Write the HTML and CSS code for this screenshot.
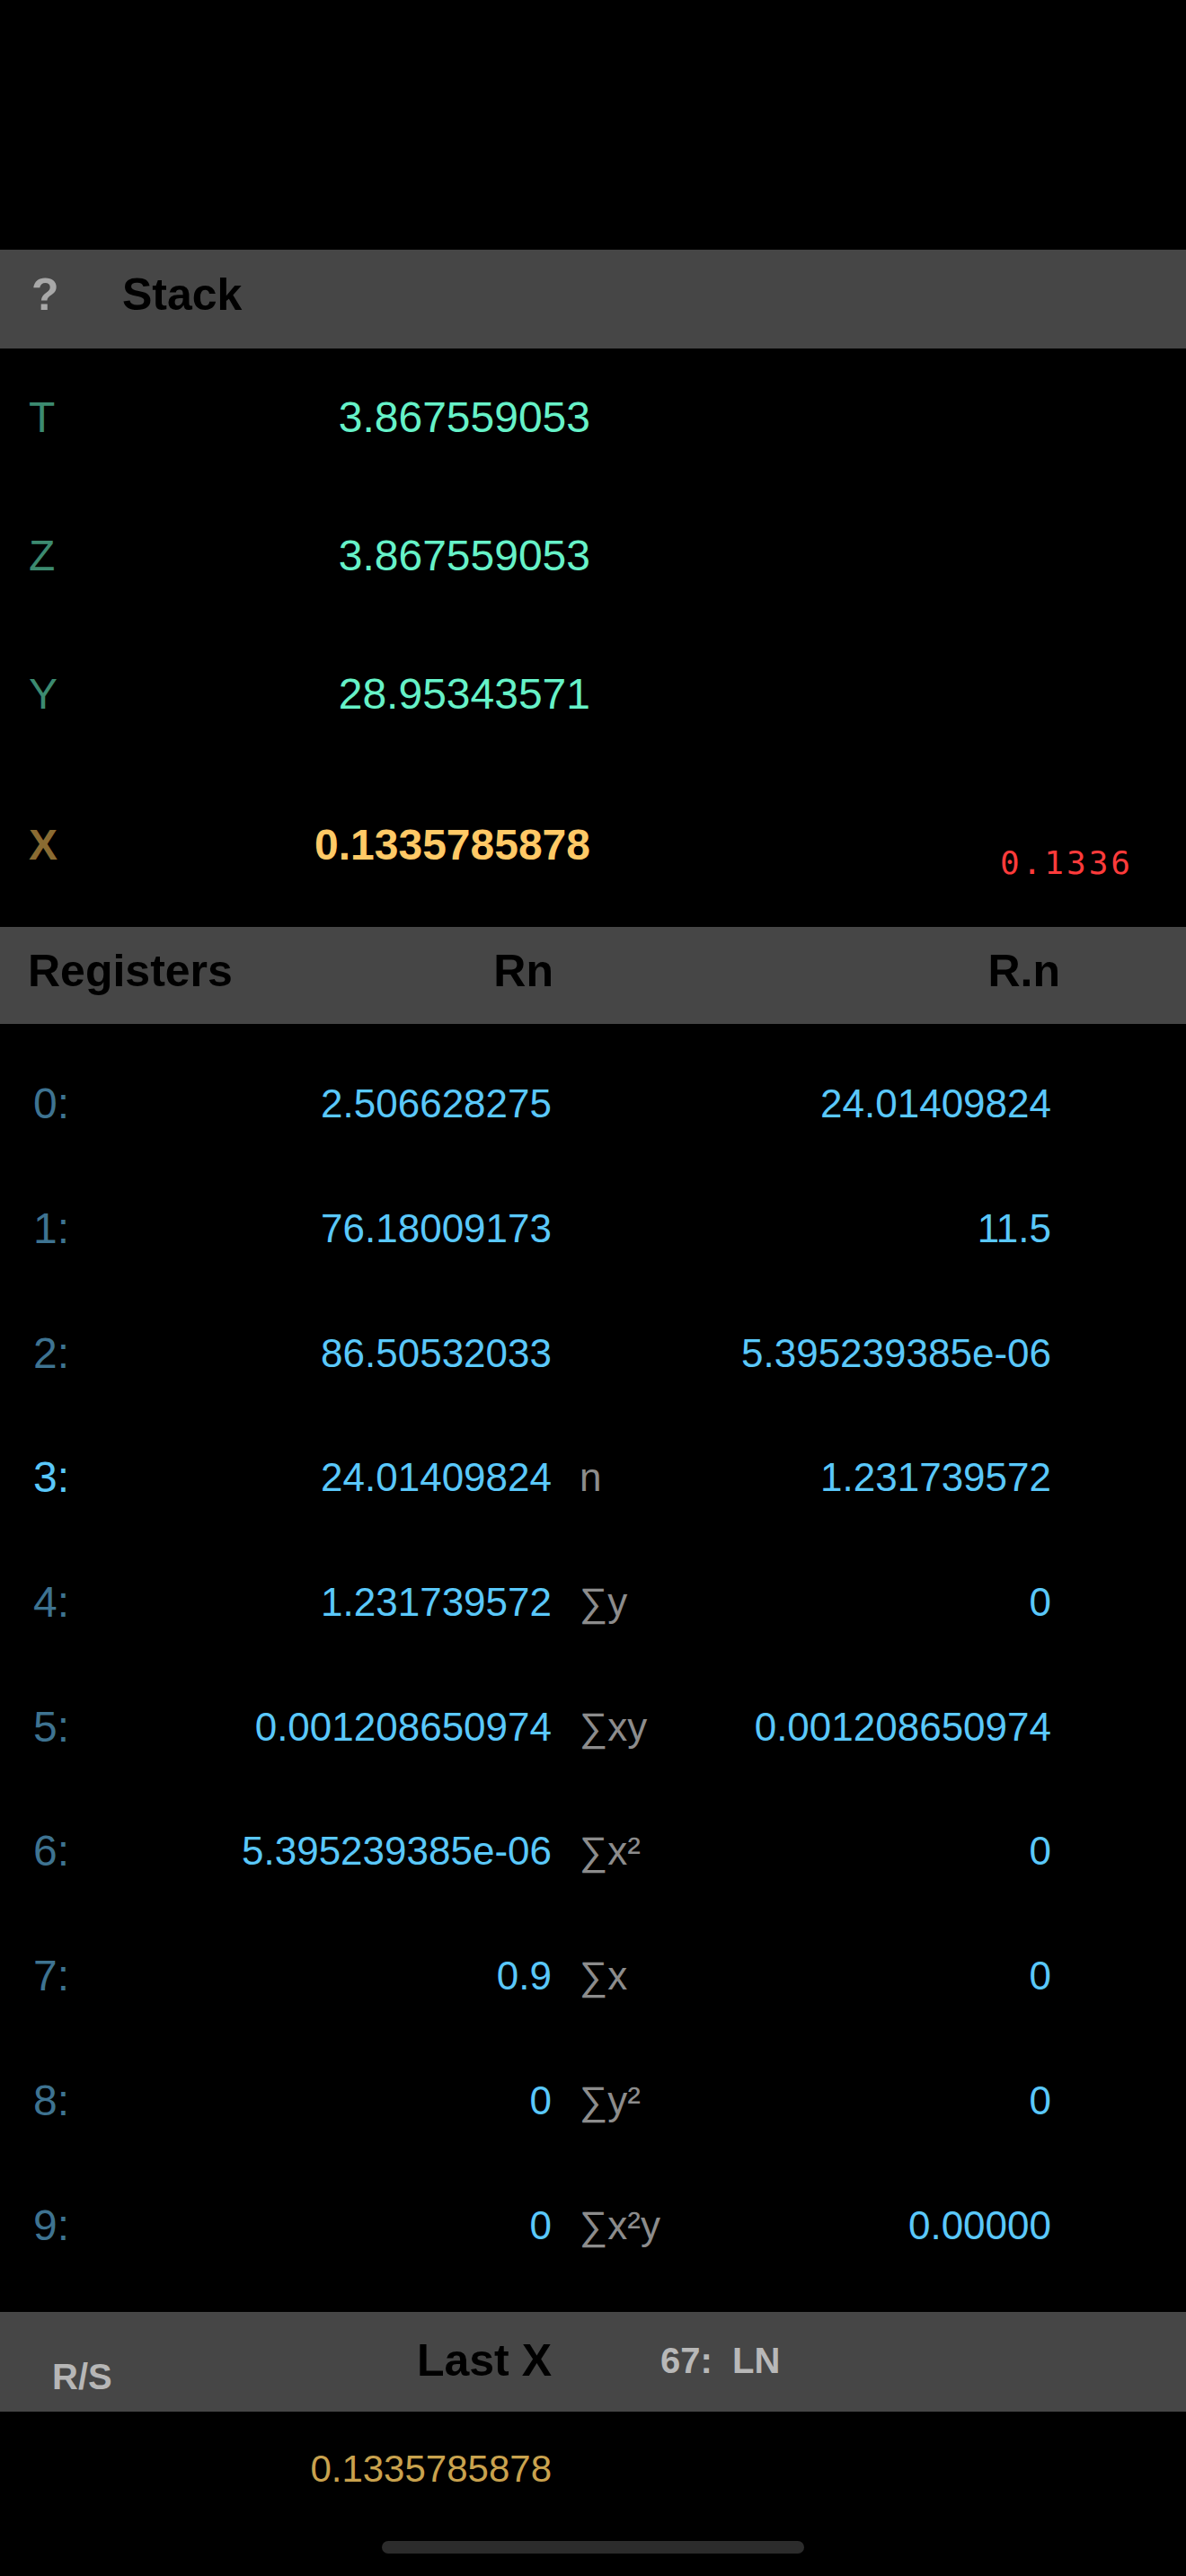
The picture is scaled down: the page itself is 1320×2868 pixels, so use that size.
FILE: index.html
```html
<!DOCTYPE html>
<html lang="en">
<head>
<meta charset="utf-8">
<title>Stack</title>
<link rel="stylesheet" href="styles.css">
</head>
<body>
<div class="screen">
  <div class="status"></div>

  <div class="bar stack-bar">
    <span class="help">?</span>
    <span class="bar-title">Stack</span>
  </div>

  <div class="srow">
    <span class="slabel">T</span>
    <span class="sval">3.867559053</span>
  </div>
  <div class="srow">
    <span class="slabel">Z</span>
    <span class="sval">3.867559053</span>
  </div>
  <div class="srow">
    <span class="slabel">Y</span>
    <span class="sval">28.95343571</span>
  </div>
  <div class="srow xrow">
    <span class="slabel xlabel">X</span>
    <span class="sval xval">0.1335785878</span>
    <span class="disp">0.1336</span>
  </div>

  <div class="bar reg-bar">
    <span class="bar-title">Registers</span>
    <span class="bar-title right">Rn</span>
    <span class="bar-title right">R.n</span>
  </div>

  <div class="reglist">
    <div class="rrow"><span class="rlabel">0:</span><span class="rval">2.506628275</span><span class="rsub"></span><span class="rval">24.01409824</span></div>
    <div class="rrow"><span class="rlabel">1:</span><span class="rval">76.18009173</span><span class="rsub"></span><span class="rval">11.5</span></div>
    <div class="rrow"><span class="rlabel">2:</span><span class="rval">86.50532033</span><span class="rsub"></span><span class="rval">5.395239385e-06</span></div>
    <div class="rrow"><span class="rlabel current">3:</span><span class="rval">24.01409824</span><span class="rsub">n</span><span class="rval">1.231739572</span></div>
    <div class="rrow"><span class="rlabel">4:</span><span class="rval">1.231739572</span><span class="rsub">∑y</span><span class="rval">0</span></div>
    <div class="rrow"><span class="rlabel">5:</span><span class="rval">0.001208650974</span><span class="rsub">∑xy</span><span class="rval">0.001208650974</span></div>
    <div class="rrow"><span class="rlabel">6:</span><span class="rval">5.395239385e-06</span><span class="rsub">∑x²</span><span class="rval">0</span></div>
    <div class="rrow"><span class="rlabel">7:</span><span class="rval">0.9</span><span class="rsub">∑x</span><span class="rval">0</span></div>
    <div class="rrow"><span class="rlabel">8:</span><span class="rval">0</span><span class="rsub">∑y²</span><span class="rval">0</span></div>
    <div class="rrow"><span class="rlabel">9:</span><span class="rval">0</span><span class="rsub">∑x²y</span><span class="rval">0.00000</span></div>
  </div>

  <div class="bar last-bar">
    <span class="rs">R/S</span>
    <span class="bar-title right">Last X</span>
    <span class="prog">67:  LN</span>
  </div>

  <div class="lastx">0.1335785878</div>

  <div class="home"></div>
</div>
</body>
</html>
```

FILE: styles.css
```css
html, body {
  margin: 0;
  padding: 0;
  background: #000;
}

.screen {
  width: 1320px;
  height: 2868px;
  background: #000;
  font-family: "Liberation Sans", Arial, sans-serif;
  overflow: hidden;
}

.status {
  height: 278px;
}

.bar {
  background: #464646;
  box-sizing: border-box;
}

.bar-title {
  font-weight: bold;
  font-size: 50px;
  line-height: 58px;
  color: #000;
}

.right {
  text-align: right;
}

/* Stack header */
.stack-bar {
  height: 110px;
  padding: 0 0 10px 35px;
  display: flex;
  align-items: center;
}

.help {
  width: 101px;
  font-weight: bold;
  font-size: 50px;
  line-height: 58px;
  color: #a8a8a8;
}

/* Stack rows */
.srow {
  height: 154px;
  padding-left: 32px;
  display: grid;
  grid-template-columns: 100px 525px 1fr;
  align-items: center;
}

.slabel {
  font-size: 48px;
  line-height: 56px;
  color: #3c8a70;
}

.sval {
  font-size: 48px;
  line-height: 56px;
  color: #66f2c8;
  text-align: right;
}

.xrow {
  height: 182px;
}

.xlabel {
  font-weight: bold;
  color: #8a6b32;
}

.xval {
  font-weight: bold;
  color: #ffc966;
}

.disp {
  font-family: "DejaVu Sans Mono", "Liberation Mono", monospace;
  font-size: 36px;
  line-height: 42px;
  letter-spacing: 3px;
  color: #ff3b3b;
  text-align: right;
  padding-right: 59px;
  margin-top: 39px;
}

/* Registers header */
.reg-bar {
  height: 108px;
  padding: 0 0 11px 31px;
  display: grid;
  grid-template-columns: 300px 285px 564px;
  align-items: center;
}

/* Registers list */
.reglist {
  padding: 20px 0 27px 0;
}

.rrow {
  height: 138.7px;
  padding-left: 37px;
  display: grid;
  grid-template-columns: 100px 477px 182px 374px;
  align-items: center;
  font-size: 44px;
  line-height: 52px;
}

.rlabel {
  font-size: 48px;
  line-height: 54px;
  color: #3e7391;
}

.rlabel.current {
  color: #5ac8fa;
}

.rval {
  color: #5ac8fa;
  text-align: right;
  white-space: nowrap;
}

.rsub {
  color: #8c8c8c;
  padding-left: 31px;
  white-space: nowrap;
}

/* Bottom header */
.last-bar {
  height: 111px;
  padding: 0 0 2px 58px;
  display: grid;
  grid-template-columns: 200px 356px 1fr;
  align-items: center;
}

.rs {
  align-self: end;
  margin-bottom: 14px;
  font-weight: bold;
  font-size: 40px;
  line-height: 46px;
  color: #b6b6b6;
}

.prog {
  padding-left: 121px;
  font-weight: bold;
  font-size: 40px;
  line-height: 46px;
  color: #b8b8b8;
  white-space: pre;
}

.lastx {
  margin-top: 40px;
  padding-right: 706px;
  text-align: right;
  font-size: 42px;
  line-height: 48px;
  color: #c9a24e;
}

.home {
  width: 470px;
  height: 14px;
  margin: 56px auto 0;
  border-radius: 7px;
  background: #2c2c2c;
}
```
